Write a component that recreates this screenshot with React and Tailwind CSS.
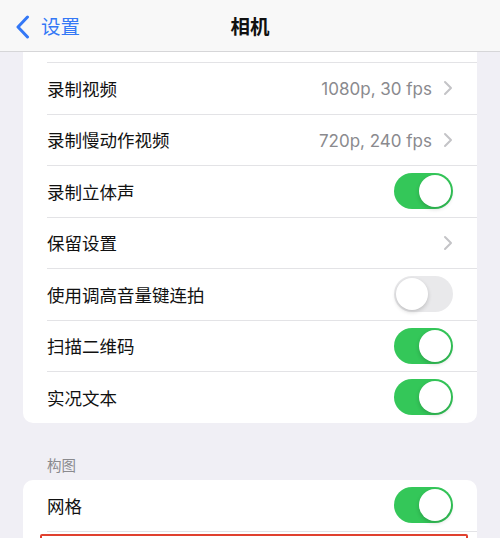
import React from 'react'

const FONT = { fontFamily: 'Inter, "Noto Sans CJK SC", sans-serif' }

function Toggle({ on }) {
  return (
    <div
      className={`relative w-[59px] h-[36px] rounded-full ${on ? 'bg-[#34c759]' : 'bg-[#e9e9eb]'}`}
    >
      <div
        className={`absolute top-[2px] w-[32px] h-[32px] rounded-full bg-white shadow-[0_2px_4px_rgba(0,0,0,0.18)] ${
          on ? 'right-[2px]' : 'left-[2px]'
        }`}
      />
    </div>
  )
}

function Chevron() {
  return (
    <svg width="10" height="16" viewBox="0 0 10 16" fill="none">
      <path d="M2 2l6 6-6 6" stroke="#c4c4c7" strokeWidth="2" strokeLinecap="round" strokeLinejoin="round" />
    </svg>
  )
}

const ROWS = [
  { label: '录制视频', value: '1080p, 30 fps', chevron: true },
  { label: '录制慢动作视频', value: '720p, 240 fps', chevron: true },
  { label: '录制立体声', toggle: true, on: true },
  { label: '保留设置', chevron: true },
  { label: '使用调高音量键连拍', toggle: true, on: false },
  { label: '扫描二维码', toggle: true, on: true },
  { label: '实况文本', toggle: true, on: true },
]

function Row({ row }) {
  return (
    <div className="h-[51.5px] ml-[24px] pr-[24px] border-t border-[#e3e3e6] flex items-center justify-between">
      <span className="text-[17.5px] text-[#111] pt-[3px]">{row.label}</span>
      <div className="flex items-center gap-[11px]">
        {row.value && <span className="text-[17px] text-[#8a8a8e] pt-[3px]">{row.value}</span>}
        {row.chevron && <Chevron />}
        {row.toggle && <Toggle on={row.on} />}
      </div>
    </div>
  )
}

export default function App() {
  return (
    <div className="w-[500px] h-[538px] overflow-hidden bg-[#f0eff5]" style={FONT}>
      {/* Nav */}
      <div className="relative h-[52px] bg-[#f8f8f8] border-b border-[#d6d6d8] flex items-center justify-center pt-[2px]">
        <div className="absolute left-[15px] top-0 h-full flex items-center gap-[11px] pt-[2px]">
          <svg width="15" height="24" viewBox="0 0 15 24" fill="none">
            <path d="M12.5 2L3 12l9.5 10" stroke="#3478f6" strokeWidth="3" strokeLinecap="round" strokeLinejoin="round" />
          </svg>
          <span className="text-[19.5px] text-[#3478f6] pt-[2px]">设置</span>
        </div>
        <span className="text-[19.5px] font-semibold text-[#111] pt-[2px]">相机</span>
      </div>

      {/* Card 1 */}
      <div className="mx-[23px] bg-white rounded-b-[10px]">
        <div className="h-[10px]" />
        {ROWS.map(r => (
          <Row key={r.label} row={r} />
        ))}
      </div>

      {/* Section header */}
      <div className="pl-[47px] pt-[33px] pb-[5px] text-[14.5px] text-[#8a8a8e] leading-[19px]">构图</div>

      {/* Card 2 */}
      <div className="mx-[23px] bg-white rounded-t-[10px]">
        <div className="h-[51.5px] ml-[24px] pr-[24px] flex items-center justify-between">
          <span className="text-[17.5px] text-[#111] pt-[3px]">网格</span>
          <Toggle on />
        </div>
        <div className="border-t border-[#e3e3e6] ml-[24px] h-[60px]">
          <div className="-ml-[7px] mr-[9px] mt-[2px] h-[50px] border-2 border-[#e0412f] rounded-[2px]" />
        </div>
      </div>
    </div>
  )
}
